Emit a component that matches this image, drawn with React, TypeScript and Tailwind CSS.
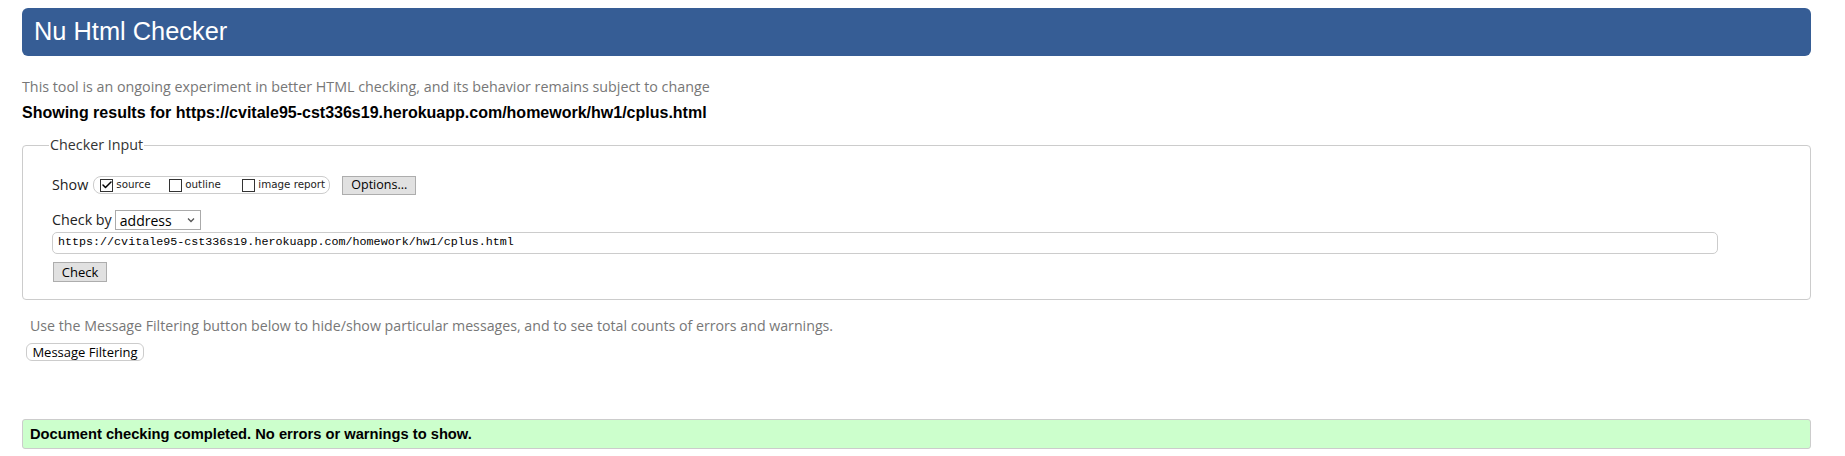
import { Check } from 'lucide-react';

const sans = "font-['Liberation_Sans',Arial,sans-serif]";
const ui = "font-['Open_Sans','Noto_Sans',sans-serif]";

function Box({ checked }: { checked?: boolean }) {
  return (
    <span className="relative inline-block h-[13px] w-[13px] shrink-0 border border-[#333] bg-white">
      {checked && (
        <Check size={12} strokeWidth={3} className="absolute -top-[1px] left-0 text-black" />
      )}
    </span>
  );
}

export default function App() {
  return (
    <div className={`min-h-[456px] w-[1845px] bg-white pl-[22px] pr-[34px] pt-[8px] ${sans}`}>
      <div className="flex h-[48px] items-center rounded-[6px] bg-[#365d95] pl-[12px]">
        <h1 className="text-[25.4px] leading-none text-white">Nu Html Checker</h1>
      </div>

      <p className={`mt-[21px] text-[14.3px] leading-[20px] text-[#777] ${ui}`}>
        This tool is an ongoing experiment in better HTML checking, and its behavior remains subject to change
      </p>
      <p className="mt-[6px] text-[16px] font-bold leading-[20px] text-black">
        Showing results for https://cvitale95-cst336s19.herokuapp.com/homework/hw1/cplus.html
      </p>

      <fieldset className="mt-[13px] rounded-[4px] border border-[#ccc] pb-[17px] pl-[29px] pr-[22px] pt-[21px]">
        <legend className={`-ml-[3px] px-[1px] text-[14.3px] leading-[18px] text-[#333] ${ui}`}>Checker Input</legend>

        <div className="flex h-[20px] items-center">
          <span className={`text-[14.3px] text-[#222] ${ui}`}>Show</span>
          <div className="ml-[5px] flex h-[18px] w-[237px] items-center rounded-[8px] border border-[#ccc] pl-[6px] font-['DejaVu_Sans',Verdana,sans-serif] text-[10.3px] text-[#222]">
            <span className="flex w-[69px] items-center">
              <Box checked />
              <span className="ml-[3px]">source</span>
            </span>
            <span className="flex w-[73px] items-center">
              <Box />
              <span className="ml-[3px]">outline</span>
            </span>
            <span className="flex items-center">
              <Box />
              <span className="ml-[3px]">image report</span>
            </span>
          </div>
          <button className={`ml-[12px] h-[19px] w-[74px] border border-[#adadad] bg-[#e1e1e1] text-[12.5px] leading-none text-black ${ui}`}>
            Options...
          </button>
        </div>

        <div className="mt-[15px] flex h-[20px] items-center">
          <span className={`text-[14.3px] text-[#222] ${ui}`}>Check by</span>
          <div className={`ml-[3px] flex h-[20px] w-[86px] items-center justify-between border border-[#aaa] bg-white pl-[4px] pr-[5px] text-[14px] text-black ${ui}`}>
            <span>address</span>
            <svg width="8" height="6" viewBox="0 0 8 6" className="text-[#555]">
              <path d="M1 1.5 L4 4.5 L7 1.5" fill="none" stroke="currentColor" strokeWidth="1.3" />
            </svg>
          </div>
        </div>

        <div className="mt-[2px] flex h-[22px] w-[1666px] items-center rounded-[5px] border border-[#ccc] pl-[5px] font-['Liberation_Mono','Courier_New',monospace] text-[11.7px] text-black">
          https://cvitale95-cst336s19.herokuapp.com/homework/hw1/cplus.html
        </div>

        <button className={`ml-[1px] mt-[8px] block h-[20px] w-[54px] border border-[#adadad] bg-[#e1e1e1] text-[13px] leading-none text-black ${ui}`}>
          Check
        </button>
      </fieldset>

      <p className={`ml-[8px] mt-[16px] text-[14.2px] leading-[20px] text-[#777] ${ui}`}>
        Use the Message Filtering button below to hide/show particular messages, and to see total counts of errors and warnings.
      </p>
      <button className={`ml-[4px] mt-[7px] block h-[18px] w-[118px] rounded-[6px] border border-[#ccc] bg-white text-[13px] leading-none text-black ${ui}`}>
        Message Filtering
      </button>

      <div className="mt-[58px] flex h-[30px] items-center rounded-[3px] border border-[#ccc] bg-[#ccffcc] pl-[7px]">
        <span className="text-[14.7px] font-bold text-black">Document checking completed. No errors or warnings to show.</span>
      </div>
    </div>
  );
}
